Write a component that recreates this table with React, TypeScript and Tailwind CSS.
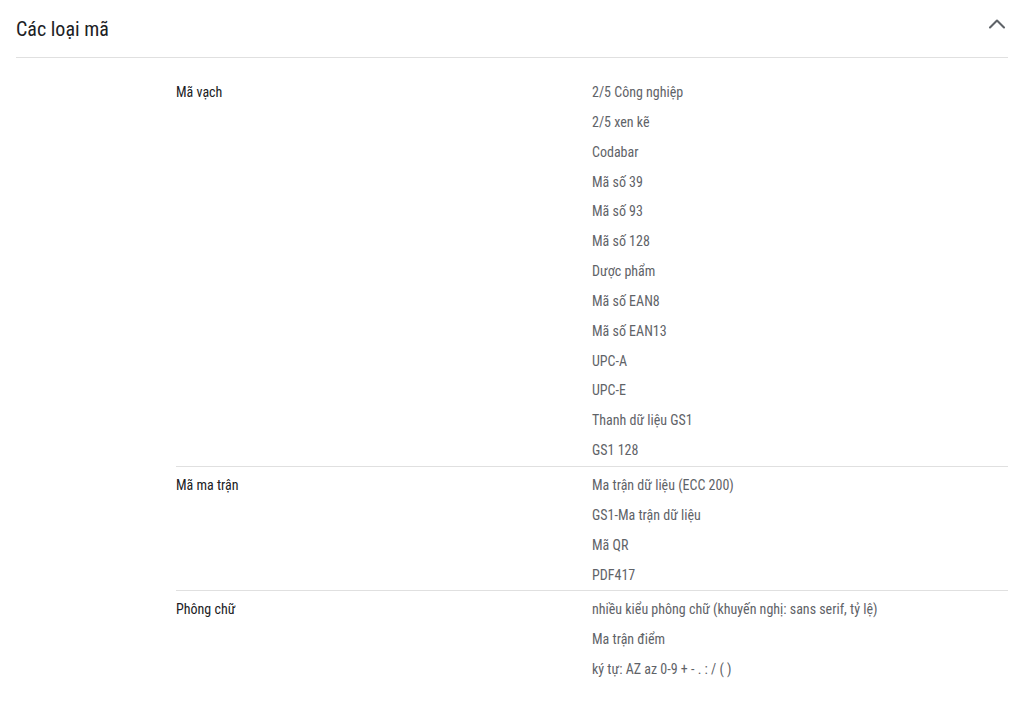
import { ChevronUp } from "lucide-react";

const groups = [
  {
    label: "Mã vạch",
    items: [
      "2/5 Công nghiệp",
      "2/5 xen kẽ",
      "Codabar",
      "Mã số 39",
      "Mã số 93",
      "Mã số 128",
      "Dược phẩm",
      "Mã số EAN8",
      "Mã số EAN13",
      "UPC-A",
      "UPC-E",
      "Thanh dữ liệu GS1",
      "GS1 128",
    ],
  },
  {
    label: "Mã ma trận",
    items: ["Ma trận dữ liệu (ECC 200)", "GS1-Ma trận dữ liệu", "Mã QR", "PDF417"],
  },
  {
    label: "Phông chữ",
    items: [
      "nhiều kiểu phông chữ (khuyến nghị: sans serif, tỷ lệ)",
      "Ma trận điểm",
      "ký tự: AZ az 0-9 + - . : / ( )",
    ],
  },
];

export default function App() {
  return (
    <div className="min-h-screen bg-white pl-4 pr-7 font-['Roboto',sans-serif] [font-stretch:condensed]">
      <div className="flex h-[58px] items-center justify-between border-b border-[#e0e0e0]">
        <h2 className="text-[20px] text-[#202124]">Các loại mã</h2>
        <ChevronUp className="mr-[-3px] mb-[10px] h-7 w-7 text-[#5f6368]" strokeWidth={1.8} />
      </div>
      <div className="mt-4 pl-40">
        {groups.map((g, i) => (
          <div
            key={g.label}
            className={`grid grid-cols-[416px_1fr] pt-1 ${i < groups.length - 1 ? "border-b border-[#e0e0e0]" : ""}`}
          >
            <div className="text-[14px] leading-[29.85px] text-[#202124]">{g.label}</div>
            <div>
              {g.items.map((it) => (
                <div key={it} className="text-[14px] leading-[29.85px] text-[#5f6368]">
                  {it}
                </div>
              ))}
            </div>
          </div>
        ))}
      </div>
    </div>
  );
}
